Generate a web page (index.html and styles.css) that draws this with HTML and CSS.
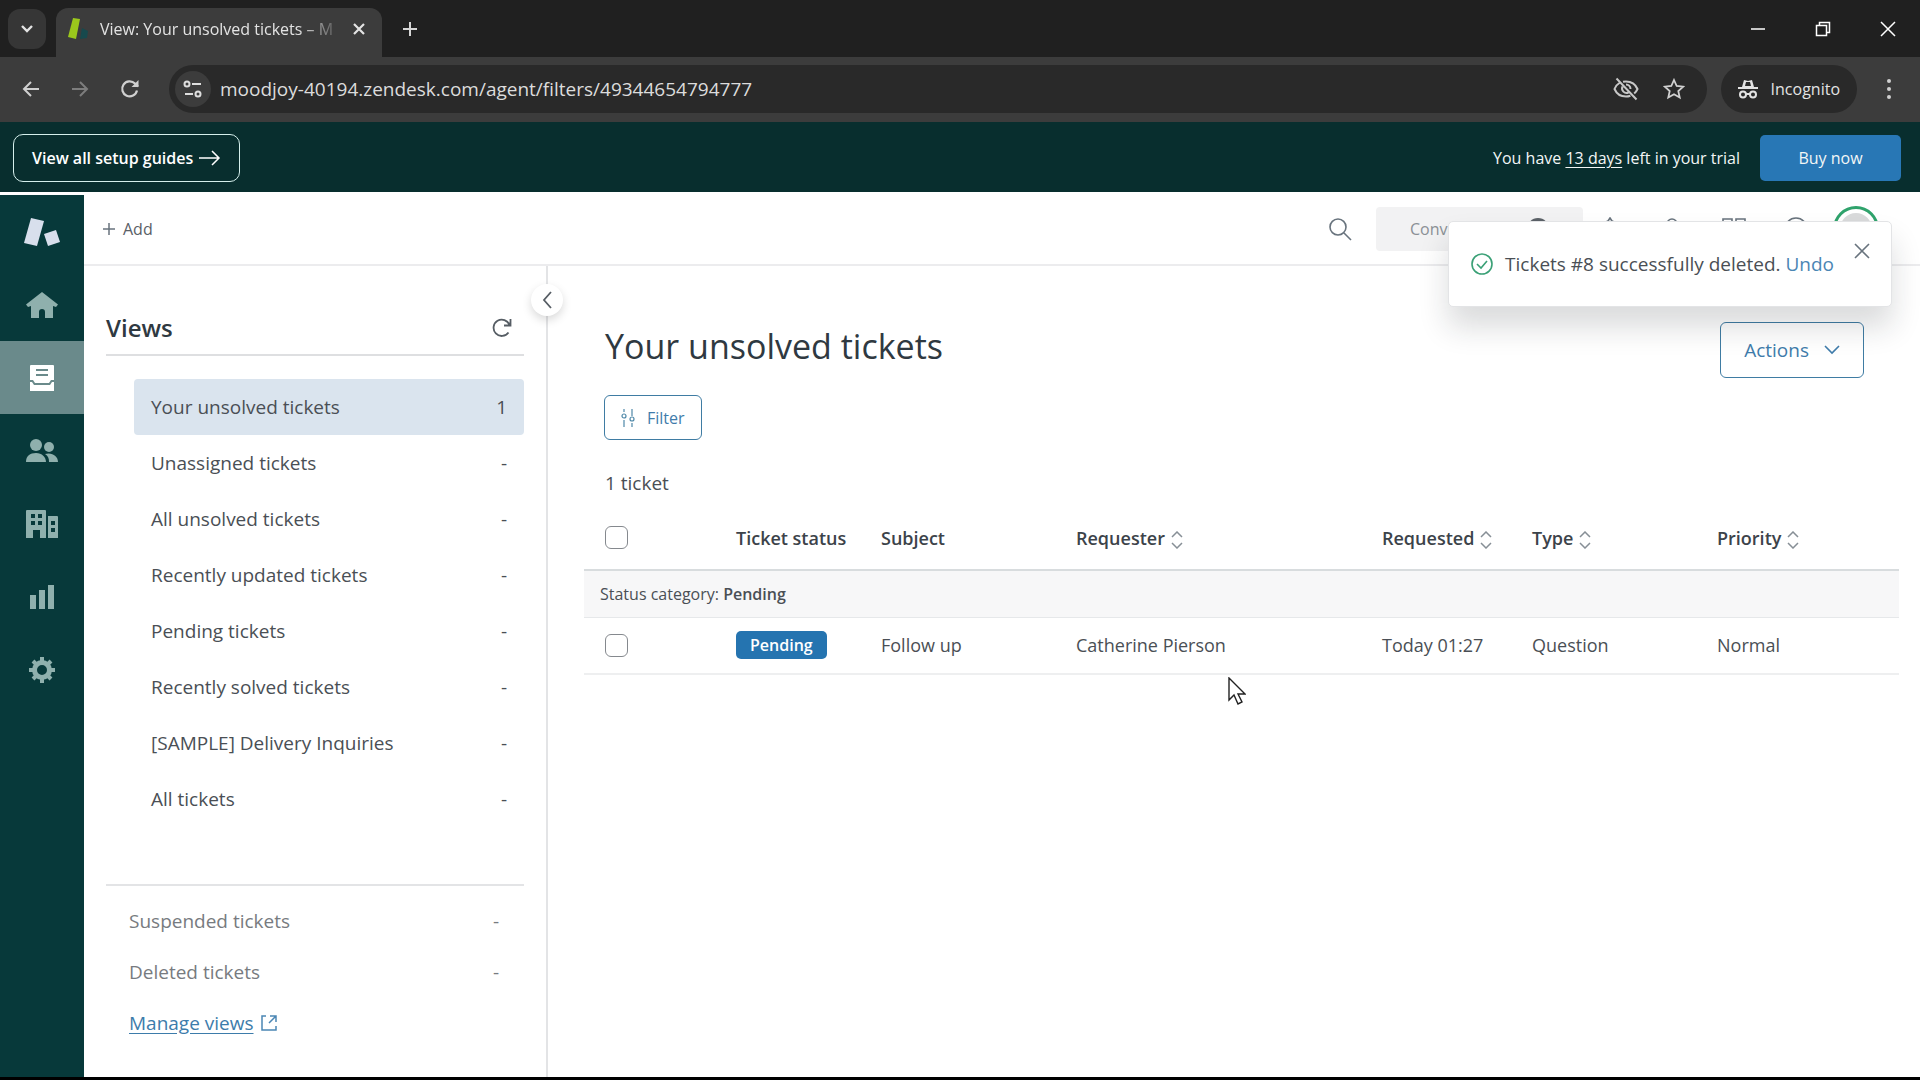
FILE: index.html
```html
<!DOCTYPE html>
<html lang="en">
<head>
  <meta charset="UTF-8">
  <title>View: Your unsolved tickets</title>
  <link rel="stylesheet" href="styles.css">
</head>
<body>

  <!-- browser tabs -->
  <div class="tabstrip">
    <button class="tab-search" aria-label="Search tabs">
      <svg width="14" height="10" viewBox="0 0 14 10"><path d="M2 2l5 5 5-5" fill="none" stroke="#e3e3e3" stroke-width="2.4"/></svg>
    </button>
    <div class="tab">
      <svg width="22" height="24" viewBox="0 0 22 24"><path d="M5 1l7 1-4 20-8-2z" fill="#9bc81c"/><path d="M14 11l6 3-1 7-7 1z" fill="#17494d"/></svg>
      <span class="tab-title">View: Your unsolved tickets – M</span>
      <button class="plain" aria-label="Close tab">
        <svg width="14" height="14" viewBox="0 0 14 14"><path d="M2 2l10 10M12 2L2 12" fill="none" stroke="#e3e3e3" stroke-width="2.2"/></svg>
      </button>
    </div>
    <button class="plain new-tab" aria-label="New tab">
      <svg width="16" height="16" viewBox="0 0 16 16"><path d="M8 1v14M1 8h14" fill="none" stroke="#d6d6d6" stroke-width="2"/></svg>
    </button>
    <div class="window-buttons">
      <button class="plain" aria-label="Minimize"><svg width="16" height="16" viewBox="0 0 16 16"><path d="M1 8h14" fill="none" stroke="#fff" stroke-width="1.5"/></svg></button>
      <button class="plain" aria-label="Restore"><svg width="16" height="16" viewBox="0 0 16 16"><path d="M1.5 4.5h10v10h-10zM4.5 4.5v-3h10v10h-3" fill="none" stroke="#fff" stroke-width="1.5"/></svg></button>
      <button class="plain" aria-label="Close"><svg width="16" height="16" viewBox="0 0 16 16"><path d="M1 1l14 14M15 1L1 15" fill="none" stroke="#fff" stroke-width="1.5"/></svg></button>
    </div>
  </div>

  <!-- address bar -->
  <div class="toolbar">
    <button class="plain nav" aria-label="Back"><svg width="18" height="18" viewBox="0 0 18 18"><path d="M17 9H2M9 2L2 9l7 7" fill="none" stroke="#d0d0d0" stroke-width="2"/></svg></button>
    <button class="plain nav" aria-label="Forward"><svg width="18" height="18" viewBox="0 0 18 18"><path d="M1 9h15M9 2l7 7-7 7" fill="none" stroke="#7d7d7d" stroke-width="2"/></svg></button>
    <button class="plain nav" aria-label="Reload"><svg width="20" height="20" viewBox="0 0 20 20"><path d="M17 11.5a7.5 7.5 0 1 1-2-7l3 3" fill="none" stroke="#d0d0d0" stroke-width="2.2"/><path d="M18.5 1v7h-7z" fill="#d0d0d0"/></svg></button>
    <div class="address">
      <span class="site-info"><svg width="20" height="18" viewBox="0 0 20 18"><g fill="none" stroke="#dedede" stroke-width="2"><circle cx="4" cy="4" r="2.5"/><path d="M9 4h9M2 14h8"/><circle cx="15" cy="14" r="2.5"/></g></svg></span>
      <input class="url" type="text" aria-label="Address" value="moodjoy-40194.zendesk.com/agent/filters/49344654794777">
      <button class="plain" aria-label="Third-party cookies blocked"><svg width="26" height="24" viewBox="0 0 26 24"><g fill="none" stroke="#c7c7c7" stroke-width="2"><path d="M7 5.500C4.500 7 2.600 9.200 1.500 12c2 4.600 6.300 7.500 11.500 7.500 1.600 0 3-.3 4.400-.8M10 4.800c1-.2 2-.3 3-.3 5.200 0 9.500 2.900 11.500 7.500-.8 1.800-1.900 3.300-3.300 4.500"/><path d="M9.500 9.500a4.500 4.500 0 0 0 6 6M13 7.500a4.500 4.500 0 0 1 4.500 4.500M3.500 1.500l20 21"/></g></svg></button>
      <button class="plain" aria-label="Bookmark this tab"><svg width="22" height="22" viewBox="0 0 22 22"><path d="M11 2l2.700 6 6.500.7-4.900 4.400 1.400 6.400L11 16.200l-5.700 3.300 1.400-6.400L1.800 8.700 8.300 8z" fill="none" stroke="#d0d0d0" stroke-width="1.8"/></svg></button>
    </div>
    <div class="incognito">
      <svg width="20" height="20" viewBox="0 0 20 20"><path d="M6 1l4 1 4-1 2 7H4z" fill="#e3e3e3"/><path d="M8 3h4l1 4H7z" fill="#292929"/><path d="M0 8h20v2H0z" fill="#e3e3e3"/><g fill="none" stroke="#e3e3e3" stroke-width="2"><circle cx="5" cy="15.5" r="3"/><circle cx="15" cy="15.5" r="3"/><path d="M8 15h4"/></g></svg>
      <span>Incognito</span>
    </div>
    <button class="plain" aria-label="Menu"><svg width="6" height="20" viewBox="0 0 6 20"><g fill="#d0d0d0"><circle cx="3" cy="2" r="2"/><circle cx="3" cy="10" r="2"/><circle cx="3" cy="18" r="2"/></g></svg></button>
  </div>

  <!-- trial banner -->
  <div class="banner">
    <button class="guides">View all setup guides
      <svg width="22" height="16" viewBox="0 0 22 16"><path d="M0 8h20M13 1l7 7-7 7" fill="none" stroke="#fff" stroke-width="1.5"/></svg>
    </button>
    <p class="trial">You have <a href="#">13 days</a> left in your trial</p>
    <button class="buy">Buy now</button>
  </div>

  <div class="app">
    <nav class="rail">
      <a class="rail-item" href="#" aria-label="Zendesk"><svg width="36" height="28" viewBox="0 0 36 28"><path d="M7 0l13 3-7 25-13-3z" fill="#d8dfec"/><path d="M20 16l12-4 4 12-12 4z" fill="#d8dfec"/></svg></a>
      <a class="rail-item" href="#" aria-label="Home"><svg width="32" height="26" viewBox="0 0 32 26"><path d="M16 0l16 12.500-2 2.500-3-1v12h-8v-6a3 3 0 0 0-6 0v6H5V14l-3 1-2-2.500z"/></svg></a>
      <a class="rail-item active" href="#" aria-label="Views"><svg width="24" height="26" viewBox="0 0 24 26"><path d="M1 0h22a1 1 0 0 1 1 1v14h-3l-2 3H5l-2-3H0V1a1 1 0 0 1 1-1zM6 4v2h12V4zM6 9v2h12V9zM0 17h2l2 3h16l2-3h2v9H0z" fill-rule="evenodd"/></svg></a>
      <a class="rail-item" href="#" aria-label="Customers"><svg width="32" height="24" viewBox="0 0 32 24"><circle cx="10" cy="6" r="6"/><circle cx="23" cy="8" r="5"/><path d="M0 23c0-6 4-9 10-9s10 4 10 9zM19 15c7-2 13 2 13 8h-9c0-4-1-6-4-8z"/></svg></a>
      <a class="rail-item" href="#" aria-label="Organizations"><svg width="32" height="28" viewBox="0 0 32 28"><path d="M1 0h18a1 1 0 0 1 1 1v27h-6v-8H7v8H0V1a1 1 0 0 1 1-1zM5 4v4h4V4zM12 4v4h4V4zM5 11v4h4v-4zM12 11v4h4v-4zM22 6h9a1 1 0 0 1 1 1v21H22zM25 11v4h4v-4zM25 18v4h4v-4z" fill-rule="evenodd"/></svg></a>
      <a class="rail-item" href="#" aria-label="Reporting"><svg width="24" height="24" viewBox="0 0 24 24"><path d="M0 10h6v14H0zM9 5h6v19H9zM18 0h6v24h-6z"/></svg></a>
      <a class="rail-item" href="#" aria-label="Admin Center"><svg width="26" height="26" viewBox="0 0 26 26"><g fill="none"><circle cx="13" cy="13" r="7.5" stroke="#8fb0ad" stroke-width="5"/><path d="M13 0v4M13 22v4M0 13h4M22 13h4M4 4l3 3M19 19l3 3M22 4l-3 3M7 19l-3 3" stroke="#8fb0ad" stroke-width="4"/></g></svg></a>
    </nav>

    <div class="workspace">
      <header class="topbar">
        <button class="plain add"><svg width="12" height="12" viewBox="0 0 12 12"><path d="M6 0v12M0 6h12" fill="none" stroke="#68737d" stroke-width="1.5"/></svg>Add</button>
        <button class="plain search" aria-label="Search"><svg width="24" height="24" viewBox="0 0 24 24"><g fill="none" stroke="#68737d" stroke-width="1.6"><circle cx="10" cy="10" r="8"/><path d="M16 16l7 7"/></g></svg></button>
        <button class="conversations">Conversations<span class="count">0</span></button>
        <button class="plain" aria-label="Notifications"><svg width="24" height="24" viewBox="0 0 24 24"><path d="M12 1l2 3c4 1 5 4 5 8l3 6H2l3-6c0-4 1-7 5-8z" fill="none" stroke="#68737d" stroke-width="1.6"/></svg></button>
        <button class="plain" aria-label="Talk"><svg width="24" height="24" viewBox="0 0 24 24"><g fill="none" stroke="#68737d" stroke-width="1.6"><circle cx="12" cy="7" r="5"/><path d="M3 23c0-12 18-12 18 0"/></g></svg></button>
        <button class="plain" aria-label="Products"><svg width="24" height="24" viewBox="0 0 24 24"><path d="M1 2h9v8H1zM14 2h9v8h-9zM1 14h9v8H1zM14 14h9v8h-9z" fill="none" stroke="#68737d" stroke-width="1.6"/></svg></button>
        <button class="plain" aria-label="Help"><svg width="24" height="24" viewBox="0 0 24 24"><circle cx="12" cy="12" r="11" fill="none" stroke="#68737d" stroke-width="1.6"/></svg></button>
        <button class="avatar" aria-label="Profile"></button>
      </header>

      <div class="content">
        <aside class="views">
          <button class="collapse" aria-label="Collapse views"><svg width="10" height="18" viewBox="0 0 10 18"><path d="M9 1L2 9l7 8" fill="none" stroke="#565d64" stroke-width="1.8"/></svg></button>
          <div class="views-head">
            <h2>Views</h2>
            <button class="plain" aria-label="Refresh views"><svg width="20" height="20" viewBox="0 0 20 20"><path d="M16.500 14.500a8.200 8.200 0 1 1 1-7.500M18.500 1v6.500H12" fill="none" stroke="#565d64" stroke-width="1.8"/></svg></button>
          </div>
          <ul class="view-list">
            <li><a class="current" href="#">Your unsolved tickets<span>1</span></a></li>
            <li><a href="#">Unassigned tickets<span>-</span></a></li>
            <li><a href="#">All unsolved tickets<span>-</span></a></li>
            <li><a href="#">Recently updated tickets<span>-</span></a></li>
            <li><a href="#">Pending tickets<span>-</span></a></li>
            <li><a href="#">Recently solved tickets<span>-</span></a></li>
            <li><a href="#">[SAMPLE] Delivery Inquiries<span>-</span></a></li>
            <li><a href="#">All tickets<span>-</span></a></li>
          </ul>
          <ul class="view-list system">
            <li><a href="#">Suspended tickets<span>-</span></a></li>
            <li><a href="#">Deleted tickets<span>-</span></a></li>
          </ul>
          <a class="manage" href="#"><span>Manage views</span><svg width="16" height="16" viewBox="0 0 16 16"><path d="M5 1H1v14h14v-4M9 1h6v6M15 1L8 8" fill="none" stroke="#4b86b4" stroke-width="1.5"/></svg></a>
        </aside>

        <main class="tickets">
          <div class="tickets-head">
            <h1>Your unsolved tickets</h1>
            <button class="outline actions">Actions<svg width="16" height="10" viewBox="0 0 16 10"><path d="M1 1l7 7 7-7" fill="none" stroke="#3f7cab" stroke-width="1.6"/></svg></button>
          </div>
          <button class="outline filter"><svg width="14" height="18" viewBox="0 0 14 18"><g fill="none" stroke="#4f88a8" stroke-width="1.2"><path d="M3 0v3M3 11v7M11 0v7M11 14v4"/><circle cx="3" cy="7" r="2"/><circle cx="11" cy="10" r="2"/></g></svg>Filter</button>
          <p class="total">1 ticket</p>

          <table>
            <colgroup>
              <col class="col-check"><col class="col-status"><col class="col-subject"><col><col class="col-requested"><col class="col-type"><col class="col-priority">
            </colgroup>
            <thead>
              <tr>
                <th><input type="checkbox" aria-label="Select all tickets"></th>
                <th>Ticket status</th>
                <th>Subject</th>
                <th>Requester <svg class="sort" width="12" height="18" viewBox="0 0 12 18"><path d="M1 6l5-5 5 5M1 12l5 5 5-5"/></svg></th>
                <th>Requested <svg class="sort" width="12" height="18" viewBox="0 0 12 18"><path d="M1 6l5-5 5 5M1 12l5 5 5-5"/></svg></th>
                <th>Type <svg class="sort" width="12" height="18" viewBox="0 0 12 18"><path d="M1 6l5-5 5 5M1 12l5 5 5-5"/></svg></th>
                <th>Priority <svg class="sort" width="12" height="18" viewBox="0 0 12 18"><path d="M1 6l5-5 5 5M1 12l5 5 5-5"/></svg></th>
              </tr>
            </thead>
            <tbody>
              <tr class="group"><td colspan="7">Status category: <b>Pending</b></td></tr>
              <tr class="ticket">
                <td><input type="checkbox" aria-label="Select ticket Follow up"></td>
                <td><span class="status">Pending</span></td>
                <td>Follow up</td>
                <td>Catherine Pierson</td>
                <td>Today 01:27</td>
                <td>Question</td>
                <td>Normal</td>
              </tr>
            </tbody>
          </table>
        </main>
      </div>
    </div>
  </div>

  <div class="toast" role="status">
    <svg width="22" height="22" viewBox="0 0 22 22"><g fill="none" stroke="#3aa076" stroke-width="1.6"><circle cx="11" cy="11" r="10"/><path d="M6 11l4 4 6-7"/></g></svg>
    <p>Tickets #8 successfully deleted. <a href="#">Undo</a></p>
    <button class="plain" aria-label="Close notification"><svg width="16" height="16" viewBox="0 0 16 16"><path d="M1 1l14 14M15 1L1 15" fill="none" stroke="#68737d" stroke-width="1.6"/></svg></button>
  </div>

  <svg class="cursor" width="18" height="28" viewBox="0 0 18 28"><path d="M1 1v22l5-5 4 9 4-2-4-8h7z" fill="#fff" stroke="#222" stroke-width="1.4"/></svg>

</body>
</html>
```
FILE: styles.css
```css
* {
  box-sizing: border-box;
}

body {
  margin: 0;
  min-height: 100vh;
  display: flex;
  flex-direction: column;
  font-family: "Open Sans", "Noto Sans", sans-serif;
  font-size: 19px;
  line-height: 24px;
  color: #4a4f55;
  background: #fff;
  border-bottom: 3px solid #000;
}

button, input {
  font: inherit;
}

svg {
  display: block;
  flex: none;
}

h1, h2, p, ul {
  margin: 0;
  padding: 0;
}

.plain {
  display: flex;
  align-items: center;
  padding: 0;
  border: 0;
  background: none;
  color: inherit;
}

/* browser window */
.tabstrip {
  display: flex;
  align-items: center;
  height: 57px;
  background: #202020;
}

.tab-search {
  display: flex;
  align-items: center;
  justify-content: center;
  width: 38px;
  height: 40px;
  margin-left: 8px;
  padding: 0;
  border: 0;
  border-radius: 12px;
  background: #363636;
}

.tab {
  display: flex;
  align-items: center;
  align-self: flex-end;
  width: 326px;
  height: 49px;
  margin-left: 10px;
  padding: 0 16px 8px 12px;
  border-radius: 12px 12px 0 0;
  background: #3c3c3c;
}

.tab-title {
  margin: 0 auto 0 10px;
  white-space: nowrap;
  font-size: 16px;
  color: #e3e3e3;
  -webkit-mask-image: linear-gradient(to right, #000 85%, transparent 105%);
  mask-image: linear-gradient(to right, #000 85%, transparent 105%);
}

.new-tab {
  margin-left: 20px;
}

.window-buttons {
  display: flex;
  gap: 49px;
  margin-left: auto;
  padding-right: 24px;
}

.toolbar {
  display: flex;
  align-items: center;
  height: 65px;
  padding: 0 28px 2px 22px;
  background: #3c3c3c;
}

.nav {
  width: 49px;
}

.address {
  display: flex;
  align-items: center;
  flex: 1;
  gap: 24px;
  height: 48px;
  padding: 0 22px 0 6px;
  border-radius: 24px;
  background: #292929;
}

.site-info {
  display: flex;
  align-items: center;
  justify-content: center;
  width: 36px;
  height: 36px;
  margin-right: -15px;
  border-radius: 50%;
  background: #3c3c3c;
}

.url {
  flex: 1;
  min-width: 0;
  padding: 0;
  border: 0;
  background: none;
  color: #dcdcdc;
}

.incognito {
  display: flex;
  align-items: center;
  gap: 13px;
  height: 48px;
  margin: 0 29px 0 14px;
  padding: 0 17px;
  border-radius: 24px;
  background: #292929;
  color: #e3e3e3;
  font-size: 16px;
}

/* trial banner */
.banner {
  display: flex;
  align-items: center;
  height: 70px;
  padding: 1px 19px 0 13px;
  background: #082e2e;
  color: #f2f6f6;
  font-size: 16px;
}

.guides {
  display: flex;
  align-items: center;
  gap: 6px;
  height: 48px;
  padding: 0 18px;
  border: 1px solid #d5efec;
  border-radius: 10px;
  background: none;
  color: #fff;
  font-weight: 600;
}

.trial {
  margin: 0 20px 0 auto;
}

.trial a {
  color: inherit;
  text-underline-offset: 3px;
}

.buy {
  width: 141px;
  height: 46px;
  border: 0;
  border-radius: 5px;
  background: #2877b5;
  color: #f2f6f6;
}

/* app frame */
.app {
  display: flex;
  flex: 1;
}

.rail {
  width: 84px;
  margin-top: 3px;
  background: #07393a;
}

.rail-item {
  display: flex;
  align-items: center;
  justify-content: center;
  height: 73px;
}

.rail-item svg {
  fill: #8fb0ad;
}

.rail-item.active {
  background: #6a8a8b;
}

.rail-item.active svg {
  fill: #fff;
}

.workspace {
  display: flex;
  flex: 1;
  flex-direction: column;
  min-width: 0;
}

.topbar {
  display: flex;
  align-items: center;
  gap: 38px;
  height: 74px;
  padding: 2px 41px 0 19px;
  border-bottom: 2px solid #ececee;
}

.add {
  gap: 8px;
  font-size: 16px;
  color: #5a6067;
}

.search {
  margin-left: auto;
  margin-right: -14px;
}

.conversations {
  display: flex;
  align-items: center;
  justify-content: space-between;
  width: 207px;
  height: 44px;
  margin-right: -23px;
  padding: 0 34px;
  border: 0;
  border-radius: 4px;
  background: #f2f2f3;
  color: #8b9096;
  font-size: 16px;
}

.count {
  width: 22px;
  height: 22px;
  border-radius: 50%;
  background: #5c6268;
  color: #fff;
  font-size: 12px;
  line-height: 22px;
  text-align: center;
}

.avatar {
  width: 46px;
  height: 46px;
  margin-left: -13px;
  padding: 0;
  border: 3px solid #2fa36c;
  border-radius: 50%;
  background: #d9dadb;
  box-shadow: inset 0 0 0 4px #fff;
}

.content {
  display: flex;
  flex: 1;
}

/* views sidebar */
.views {
  position: relative;
  width: 464px;
  padding: 42px 22px 0;
  border-right: 2px solid #e3e4e6;
}

.collapse {
  position: absolute;
  top: 18px;
  right: -17px;
  display: flex;
  align-items: center;
  justify-content: center;
  width: 32px;
  height: 32px;
  padding: 0;
  border: 0;
  border-radius: 50%;
  background: #fff;
  box-shadow: 0 4px 10px rgba(0, 0, 0, 0.15);
}

.views-head {
  display: flex;
  align-items: center;
  justify-content: space-between;
  height: 48px;
  padding: 0 12px 6px 0;
  border-bottom: 2px solid #dedfe1;
}

h2 {
  font-size: 24px;
  font-weight: 600;
  color: #2f3941;
}

.view-list {
  padding: 23px 0 0 28px;
  list-style: none;
}

.view-list a {
  display: flex;
  align-items: center;
  justify-content: space-between;
  height: 56px;
  padding: 0 17px;
  border-radius: 4px;
  color: inherit;
  text-decoration: none;
}

.view-list .current {
  background: #dae4ee;
}

.view-list.system {
  margin-top: 57px;
  padding: 9px 8px 0 6px;
  border-top: 2px solid #e3e4e6;
  color: #777b80;
}

.view-list.system a {
  height: 51px;
}

.manage {
  display: flex;
  align-items: center;
  gap: 7px;
  height: 51px;
  padding-left: 23px;
  color: #3d7cab;
  text-decoration: none;
}

.manage span {
  text-decoration: underline;
  text-underline-offset: 3px;
}

/* ticket table */
.tickets {
  flex: 1;
  min-width: 0;
  padding: 56px 21px 0 36px;
}

.tickets-head {
  display: flex;
  align-items: flex-start;
  justify-content: space-between;
  margin: 0 35px 0 21px;
}

h1 {
  font-size: 34px;
  line-height: 48px;
  font-weight: 400;
  color: #2f3941;
}

.outline {
  display: flex;
  align-items: center;
  border: 1px solid #3f7ca3;
  border-radius: 6px;
  background: none;
  color: #3f7cab;
}

.actions {
  gap: 15px;
  height: 56px;
  padding: 0 23px;
}

.filter {
  gap: 12px;
  height: 45px;
  margin: 17px 0 0 20px;
  padding: 0 16px;
  font-size: 16px;
}

.total {
  margin: 31px 0 0 21px;
}

table {
  width: 100%;
  margin-top: 15px;
  border-collapse: collapse;
  table-layout: fixed;
  font-size: 18px;
}

.col-check {
  width: 140px;
}

.col-status {
  width: 145px;
}

.col-subject {
  width: 195px;
}

.col-requested {
  width: 150px;
}

.col-type {
  width: 185px;
}

.col-priority {
  width: 194px;
}

th, td {
  padding: 0 0 0 12px;
  text-align: left;
  white-space: nowrap;
}

th:first-child,
.ticket td:first-child {
  padding-left: 21px;
}

th {
  height: 60px;
  padding-bottom: 4px;
  border-bottom: 2px solid #d8dcde;
  font-weight: 600;
  color: #3c434a;
}

.sort {
  display: inline-block;
  margin-left: 1px;
  vertical-align: middle;
  fill: none;
  stroke: #878f96;
  stroke-width: 1.5px;
}

.group td {
  height: 47px;
  padding-left: 16px;
  background: #f7f7f8;
  border-bottom: 1px solid #e6e8ea;
  font-size: 16px;
}

.group b {
  font-weight: 600;
}

.ticket td {
  height: 57px;
  border-bottom: 2px solid #eeeff0;
}

input[type="checkbox"] {
  display: block;
  width: 23px;
  height: 23px;
  margin: 0;
  appearance: none;
  border: 1px solid #85898e;
  border-radius: 6px;
  background: #fff;
}

.status {
  display: inline-block;
  padding: 2px 14px;
  border-radius: 5px;
  background: #2574b0;
  color: #fff;
  font-size: 16px;
  font-weight: 600;
}

/* deletion notice, over the top bar */
.toast {
  position: absolute;
  top: 221px;
  right: 28px;
  display: flex;
  align-items: center;
  gap: 12px;
  height: 86px;
  padding: 0 21px 0 22px;
  border: 1px solid #e3e4e6;
  border-radius: 5px;
  background: #fff;
  box-shadow: 0 20px 30px rgba(23, 30, 40, 0.16);
}

.toast a {
  color: #4b86b4;
  text-decoration: none;
}

.toast .plain {
  align-self: flex-start;
  margin: 21px 0 0 8px;
}

.cursor {
  position: absolute;
  top: 677px;
  left: 1228px;
}
```
